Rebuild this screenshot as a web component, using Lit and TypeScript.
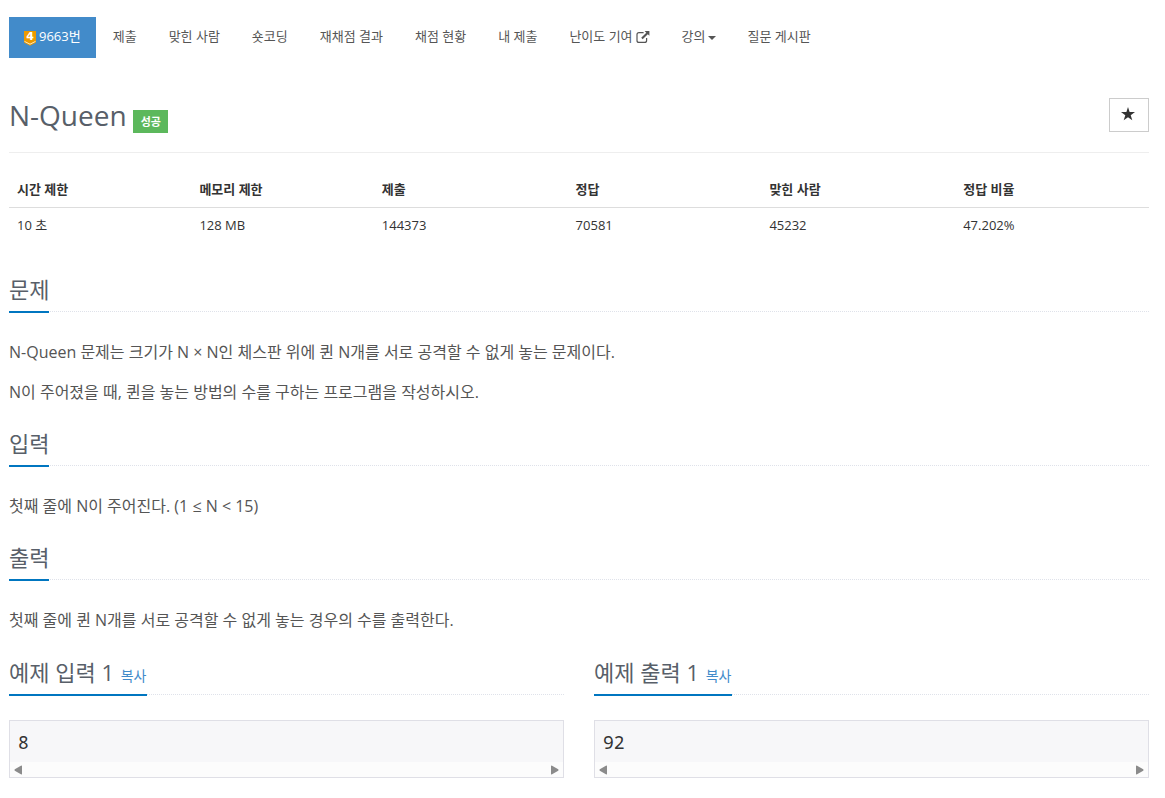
import { LitElement, html, css, svg } from "lit";
import { customElement, property } from "lit/decorators.js";

const externalIcon = svg`<svg class="external" viewBox="0 0 14 12" width="14" height="12" aria-hidden="true">
  <path d="M7.6 1.6H3Q1 1.6 1 3.6V9.4Q1 11.4 3 11.4H8.6Q10.6 11.4 10.6 9.4V7" fill="none" stroke="currentColor" stroke-width="1.2"/>
  <path d="M8.6 0H13.4V4.8L11.8 3.2L6.7 8.3L5.2 6.8L10.3 1.7Z" fill="currentColor"/>
</svg>`;

@customElement("problem-section")
class ProblemSection extends LitElement {
  @property() heading = "";
  @property({ type: Boolean }) copy = false;

  static styles = css`
    :host { display: block; }
    .headline {
      display: flex;
      border-bottom: 1px dotted #dfe2ea;
      margin-bottom: 25px;
    }
    .title {
      margin: 0 0 -2px;
      padding-bottom: 5px;
      border-bottom: 2px solid #0076c0;
      font-size: 22px;
      line-height: 33px;
      font-weight: 400;
      color: #585f69;
    }
    .copy {
      padding: 0 1px;
      border: 0;
      background: none;
      font: inherit;
      font-size: 14px;
      line-height: 20px;
      color: #428bca;
      cursor: pointer;
    }
  `;

  render() {
    return html`
      <section>
        <div class="headline">
          <h2 class="title">${this.heading}${this.copy ? html` <button class="copy" type="button">복사</button>` : ""}</h2>
        </div>
        <slot></slot>
      </section>
    `;
  }
}

@customElement("sample-box")
class SampleBox extends LitElement {
  @property() text = "";

  static styles = css`
    :host { display: block; }
    .box { border: 1px solid #dfdfe6; background: #f7f7f9; }
    .data {
      margin: 0;
      padding: 9px 8px 7px;
      font-family: "Noto Sans Mono", "Open Sans", sans-serif;
      font-size: 18px;
      line-height: 25px;
      color: #333;
    }
    .track {
      display: flex;
      justify-content: space-between;
      align-items: center;
      height: 15px;
      padding: 0 4px;
      background: #fcfcfc;
      color: #8b8b8b;
    }
    .arrow { display: block; fill: currentColor; }
  `;

  render() {
    return html`
      <div class="box">
        <pre class="data">${this.text}</pre>
        <div class="track" aria-hidden="true">
          <svg class="arrow" width="8" height="10" viewBox="0 0 8 10"><path d="M8 1.2V8.8Q8 10 6.9 9.3L.8 5.7Q0 5 .8 4.3L6.9.7Q8 0 8 1.2Z"/></svg>
          <svg class="arrow" width="8" height="10" viewBox="0 0 8 10"><path d="M0 1.2V8.8Q0 10 1.1 9.3L7.2 5.7Q8 5 7.2 4.3L1.1.7Q0 0 0 1.2Z"/></svg>
        </div>
      </div>
    `;
  }
}

@customElement("app-root")
class AppRoot extends LitElement {
  private menu = [
    { label: "제출" },
    { label: "맞힌 사람" },
    { label: "숏코딩" },
    { label: "재채점 결과" },
    { label: "채점 현황" },
    { label: "내 제출" },
    { label: "난이도 기여", external: true },
    { label: "강의", caret: true },
    { label: "질문 게시판" },
  ];

  private info = [
    { name: "시간 제한", value: "10 초", size: "narrow" },
    { name: "메모리 제한", value: "128 MB", size: "narrow" },
    { name: "제출", value: "144373", size: "wide" },
    { name: "정답", value: "70581", size: "wide" },
    { name: "맞힌 사람", value: "45232", size: "wide" },
    { name: "정답 비율", value: "47.202%", size: "rest" },
  ];

  static styles = css`
    :host {
      display: block;
      box-sizing: border-box;
      padding: 17px 16px 20px 9px;
      background: #fff;
      font-family: "Open Sans", "Noto Sans CJK KR", sans-serif;
      font-size: 13px;
      line-height: 19px;
      color: #333;
    }
    .menu {
      display: flex;
      flex-wrap: wrap;
      gap: 2px;
      margin: 0;
      padding: 0;
      list-style: none;
    }
    .link {
      display: flex;
      align-items: center;
      padding: 10px 15px 12px;
      color: #555;
      text-decoration: none;
      white-space: nowrap;
    }
    .current { background: #428bca; color: #fff; }
    .tier { margin: 3px 3px 0 0; overflow: visible; }
    .tier-level { font-family: "DejaVu Sans", sans-serif; font-size: 11px; font-weight: 700; fill: #fff; }
    .external { margin-left: 3px; }
    .caret {
      margin: 2px 0 0 2px;
      border-top: 4px solid;
      border-left: 4px solid transparent;
      border-right: 4px solid transparent;
    }
    .header {
      display: flex;
      justify-content: space-between;
      align-items: flex-start;
      margin: 40px 0 19px;
      padding-bottom: 20px;
      border-bottom: 1px solid #eee;
    }
    .name {
      display: flex;
      align-items: baseline;
      gap: 6px;
    }
    .title {
      margin: 0;
      font-size: 28px;
      line-height: 34px;
      font-weight: 400;
      color: #585f69;
    }
    .badge {
      padding: 0 7px 0 8px;
      background: #5cb85c;
      color: #fff;
      font-size: 11px;
      line-height: 23px;
      font-weight: 700;
    }
    .favorite {
      display: flex;
      align-items: center;
      justify-content: center;
      box-sizing: border-box;
      width: 40px;
      height: 34px;
      padding: 0 2px 2px 0;
      border: 1px solid #ccc;
      background: #fff;
      color: #333;
      cursor: pointer;
    }
    .header { padding-bottom: 19px; }
    .info {
      width: 100%;
      table-layout: fixed;
      border-collapse: collapse;
      margin-bottom: 30px;
      text-align: left;
    }
    .info th, .info td { box-sizing: border-box; padding: 8px; line-height: 19px; }
    .info th { border-bottom: 1px solid #ddd; font-weight: 700; }
    .narrow { width: 16%; }
    .wide { width: 17%; }
    .text {
      margin: 0 0 10px;
      font-size: 16px;
      line-height: 30px;
      color: #555;
    }
    .block { margin-bottom: 20px; }
    .samples {
      display: grid;
      grid-template-columns: 1fr 1fr;
      gap: 30px;
      padding-top: 1px;
    }
  `;

  render() {
    return html`
      <nav>
        <ul class="menu">
          <li>
            <a class="link current" href="#">
              <svg class="tier" width="12" height="15" viewBox="0 0 12 15" aria-hidden="true">
                <path d="M0 0H12V11.5L6 14.8L0 11.5Z" fill="#ec9a00"/>
                <path d="M.5 10.4L6 13.2L11.5 10.4" fill="none" stroke="#ffe9c2" stroke-width="1"/>
                <text class="tier-level" x="6" y="9" text-anchor="middle">4</text>
              </svg>9663번
            </a>
          </li>
          ${this.menu.map(
            (m) => html`<li><a class="link" href="#">${m.label}${m.external ? externalIcon : ""}${m.caret ? html`<span class="caret"></span>` : ""}</a></li>`
          )}
        </ul>
      </nav>

      <main>
        <header class="header">
          <div class="name">
            <h1 class="title">N-Queen</h1>
            <span class="badge">성공</span>
          </div>
          <button class="favorite" type="button" aria-label="즐겨찾기">
            <svg width="14" height="14" viewBox="0 0 14 14" fill="currentColor" aria-hidden="true">
              <path d="M7 0L8.6 5H14L9.7 8.2L11.3 13.3L7 10.2L2.7 13.3L4.3 8.2L0 5H5.4Z"/>
            </svg>
          </button>
        </header>

        <table class="info">
          <thead>
            <tr>${this.info.map((c) => html`<th scope="col" class=${c.size}>${c.name}</th>`)}</tr>
          </thead>
          <tbody>
            <tr>${this.info.map((c) => html`<td>${c.value}</td>`)}</tr>
          </tbody>
        </table>

        <problem-section class="block" heading="문제">
          <p class="text">N-Queen 문제는 크기가 N × N인 체스판 위에 퀸 N개를 서로 공격할 수 없게 놓는 문제이다.</p>
          <p class="text">N이 주어졌을 때, 퀸을 놓는 방법의 수를 구하는 프로그램을 작성하시오.</p>
        </problem-section>
        <problem-section class="block" heading="입력">
          <p class="text">첫째 줄에 N이 주어진다. (1 ≤ N &lt; 15)</p>
        </problem-section>
        <problem-section class="block" heading="출력">
          <p class="text">첫째 줄에 퀸 N개를 서로 공격할 수 없게 놓는 경우의 수를 출력한다.</p>
        </problem-section>

        <div class="samples">
          <problem-section heading="예제 입력 1" copy>
            <sample-box text="8"></sample-box>
          </problem-section>
          <problem-section heading="예제 출력 1" copy>
            <sample-box text="92"></sample-box>
          </problem-section>
        </div>
      </main>
    `;
  }
}
